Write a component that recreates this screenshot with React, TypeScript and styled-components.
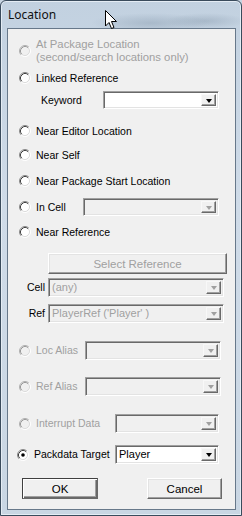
import styled, { createGlobalStyle } from 'styled-components';

const Global = createGlobalStyle`
  html, body {
    margin: 0;
    padding: 0;
    background: #c8d5e2;
  }
  body {
    font-family: Tahoma, "Liberation Sans", Arial, sans-serif;
    font-size: 10.5px;
  }
`;

const Frame = styled.div`
  position: relative;
  box-sizing: border-box;
  width: 242px;
  height: 516px;
  padding: 0 5px 5px 6px;
  display: flex;
  flex-direction: column;
  border: 1px solid #3a4b5c;
  border-radius: 6px 6px 0 0;
  background:
    radial-gradient(ellipse 60px 10px at 150px 22px, rgba(120, 140, 160, 0.35), transparent),
    radial-gradient(ellipse 40px 8px at 205px 20px, rgba(110, 130, 150, 0.3), transparent),
    linear-gradient(180deg, #c2d1e0 0%, #cfdbe8 40%, #c9d6e3 100%);
  box-shadow: inset 0 0 0 1px #e4ecf4;
`;

const TitleBar = styled.div`
  height: 27px;
  flex: none;
  display: flex;
  align-items: center;
  padding-left: 1px;
  font-family: "Noto Sans", "Open Sans", sans-serif;
  font-size: 12px;
  color: #101010;
`;

const Client = styled.div`
  flex: 1;
  box-sizing: border-box;
  border: 1px solid #67788a;
  background: #f0f0f0;
  display: flex;
  flex-direction: column;
`;

const Row = styled.div<{ $h: number; $mt: number; $pl: number }>`
  display: flex;
  align-items: center;
  height: ${(p) => p.$h}px;
  margin-top: ${(p) => p.$mt}px;
  padding-left: ${(p) => p.$pl}px;
  flex: none;
`;

const Label = styled.span<{ $w?: number; $off?: boolean; $right?: boolean }>`
  display: inline-block;
  width: ${(p) => (p.$w ? `${p.$w}px` : 'auto')};
  text-align: ${(p) => (p.$right ? 'right' : 'left')};
  color: ${(p) => (p.$off ? '#a0a0a0' : '#000')};
  white-space: nowrap;
  line-height: 13px;
  flex: none;
`;

const RadioBox = styled.svg`
  width: 12px;
  height: 12px;
  flex: none;
  margin-right: 5px;
`;

function Radio({ checked, off }: { checked?: boolean; off?: boolean }) {
  return (
    <RadioBox viewBox="0 0 12 12">
      <circle cx="6" cy="6" r="4.5" fill={off ? '#f0f0f0' : '#fff'} />
      <path d="M2.11 9.89 A5.5 5.5 0 0 1 9.89 2.11" fill="none" stroke={off ? '#b0b0b0' : '#8a8a8a'} />
      <path d="M2.82 9.18 A4.5 4.5 0 0 1 9.18 2.82" fill="none" stroke={off ? '#9a9a9a' : '#404040'} />
      <path d="M9.89 2.11 A5.5 5.5 0 0 1 2.11 9.89" fill="none" stroke="#ffffff" />
      <path d="M9.18 2.82 A4.5 4.5 0 0 1 2.82 9.18" fill="none" stroke="#dcdcdc" />
      {checked && <circle cx="6" cy="6" r="1.8" fill="#000" />}
    </RadioBox>
  );
}

const ComboBox = styled.div<{ $w: number; $off?: boolean }>`
  box-sizing: border-box;
  width: ${(p) => p.$w}px;
  height: 100%;
  flex: none;
  display: flex;
  align-items: center;
  border-top: 1px solid #a0a0a0;
  border-left: 1px solid #a0a0a0;
  border-right: 1px solid #ffffff;
  border-bottom: 1px solid #ffffff;
  box-shadow: inset 1px 1px 0 #696969, inset -1px -1px 0 #e3e3e3;
  background: ${(p) => (p.$off ? '#f0f0f0' : '#ffffff')};
  color: ${(p) => (p.$off ? '#a0a0a0' : '#000')};
  padding: 2px 2px 2px 3px;
  font-size: 11px;
`;

const ComboText = styled.span`
  flex: 1;
  white-space: nowrap;
  overflow: hidden;
  line-height: 13px;
`;

const DropButton = styled.span<{ $off?: boolean }>`
  box-sizing: border-box;
  width: 15px;
  height: 100%;
  flex: none;
  display: flex;
  align-items: center;
  justify-content: center;
  background: #f0f0f0;
  border-top: 1px solid #f8f8f8;
  border-left: 1px solid #f8f8f8;
  border-right: 1px solid #696969;
  border-bottom: 1px solid #696969;
  box-shadow: inset -1px -1px 0 #a0a0a0;

  &::after {
    content: '';
    display: block;
    margin-top: 1px;
    border-left: 3.5px solid transparent;
    border-right: 3.5px solid transparent;
    border-top: 4px solid ${(p) => (p.$off ? '#a0a0a0' : '#000')};
  }
`;

function Combo({ w, off, value }: { w: number; off?: boolean; value?: string }) {
  return (
    <ComboBox $w={w} $off={off}>
      <ComboText>{value}</ComboText>
      <DropButton $off={off} />
    </ComboBox>
  );
}

const PushButton = styled.div<{ $w: number; $off?: boolean; $default?: boolean; $ml?: number }>`
  box-sizing: border-box;
  width: ${(p) => p.$w}px;
  height: 100%;
  flex: none;
  margin-left: ${(p) => p.$ml ?? 0}px;
  display: flex;
  align-items: center;
  justify-content: center;
  background: #f0f0f0;
  color: ${(p) => (p.$off ? '#a0a0a0' : '#000')};
  border: 1px solid ${(p) => (p.$default ? '#404040' : 'transparent')};
  border-top-color: ${(p) => (p.$default ? '#404040' : '#ffffff')};
  border-left-color: ${(p) => (p.$default ? '#404040' : '#ffffff')};
  border-right-color: #696969;
  border-bottom-color: #696969;
  box-shadow: ${(p) =>
    p.$default
      ? 'inset 1px 1px 0 #ffffff, inset -1px -1px 0 #696969, inset -2px -2px 0 #a0a0a0'
      : 'inset -1px -1px 0 #a0a0a0, inset 1px 1px 0 #e3e3e3'};
  font-size: 11.5px;
`;

const TwoLine = styled.span`
  display: flex;
  flex-direction: column;
  color: #a0a0a0;
  line-height: 13px;
  font-size: 11.3px;
`;

const Cursor = styled.svg`
  position: absolute;
  left: 104px;
  top: 9px;
  width: 13px;
  height: 20px;
`;

export default function App() {
  return (
    <>
      <Global />
      <Frame>
        <TitleBar>Location</TitleBar>
        <Client>
          <Row $h={26} $mt={9} $pl={11}>
            <Radio off />
            <TwoLine>
              <span>At Package Location</span>
              <span>(second/search locations only)</span>
            </TwoLine>
          </Row>
          <Row $h={14} $mt={7} $pl={11}>
            <Radio />
            <Label>Linked Reference</Label>
          </Row>
          <Row $h={18} $mt={6} $pl={33}>
            <Label $w={62}>Keyword</Label>
            <Combo w={116} />
          </Row>
          <Row $h={14} $mt={15} $pl={11}>
            <Radio />
            <Label>Near Editor Location</Label>
          </Row>
          <Row $h={14} $mt={10} $pl={11}>
            <Radio />
            <Label>Near Self</Label>
          </Row>
          <Row $h={14} $mt={12} $pl={11}>
            <Radio />
            <Label>Near Package Start Location</Label>
          </Row>
          <Row $h={18} $mt={10} $pl={11}>
            <Radio />
            <Label $w={47}>In Cell</Label>
            <Combo w={136} off />
          </Row>
          <Row $h={14} $mt={9} $pl={11}>
            <Radio />
            <Label>Near Reference</Label>
          </Row>
          <Row $h={21} $mt={14} $pl={40}>
            <PushButton $w={179} $off>
              Select Reference
            </PushButton>
          </Row>
          <Row $h={19} $mt={4} $pl={0}>
            <Label $w={37} $right>
              Cell
            </Label>
            <Label $w={3} />
            <Combo w={176} off value="(any)" />
          </Row>
          <Row $h={19} $mt={7} $pl={0}>
            <Label $w={37} $right>
              Ref
            </Label>
            <Label $w={3} />
            <Combo w={176} off value="PlayerRef ('Player' )" />
          </Row>
          <Row $h={19} $mt={18} $pl={11}>
            <Radio off />
            <Label $w={49} $off>
              Loc Alias
            </Label>
            <Combo w={136} off />
          </Row>
          <Row $h={19} $mt={17} $pl={11}>
            <Radio off />
            <Label $w={49} $off>
              Ref Alias
            </Label>
            <Combo w={136} off />
          </Row>
          <Row $h={19} $mt={18} $pl={11}>
            <Radio off />
            <Label $w={79} $off>
              Interrupt Data
            </Label>
            <Combo w={104} off />
          </Row>
          <Row $h={19} $mt={12} $pl={9}>
            <Radio checked />
            <Label $w={81}>Packdata Target</Label>
            <Combo w={104} value="Player" />
          </Row>
          <Row $h={21} $mt={14} $pl={14}>
            <PushButton $w={76} $default>
              OK
            </PushButton>
            <PushButton $w={75} $ml={49}>
              Cancel
            </PushButton>
          </Row>
        </Client>
        <Cursor viewBox="0 0 13 20">
          <path
            d="M0.5 0.5 L0.5 16 L4 12.5 L6.5 18.5 L9 17.5 L6.5 11.5 L11.5 11.5 Z"
            fill="#fff"
            stroke="#000"
            strokeWidth="1"
            strokeLinejoin="miter"
          />
        </Cursor>
      </Frame>
    </>
  );
}
